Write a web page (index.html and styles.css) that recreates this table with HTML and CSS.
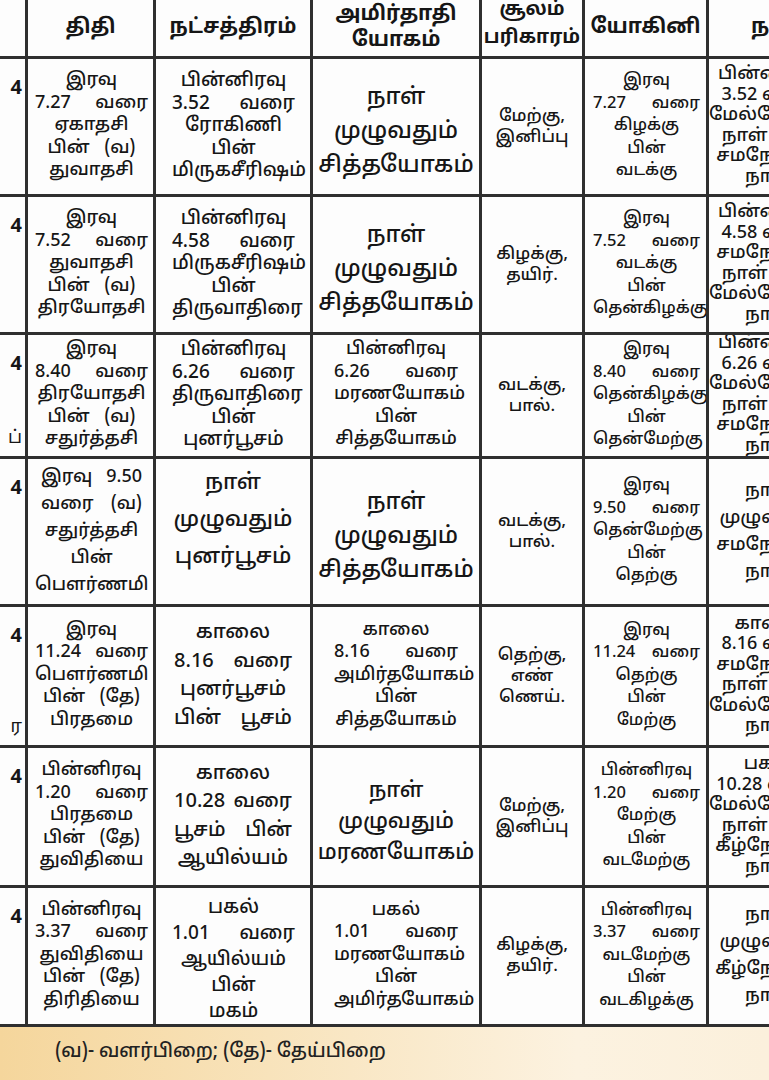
FILE: index.html
```html
<!DOCTYPE html>
<html lang="ta">
<head>
<meta charset="utf-8">
<title>பஞ்சாங்கம்</title>
<link rel="stylesheet" href="styles.css">
</head>
<body>
<div class="page">
  <div class="sheet">
    <div class="h"></div>
    <div class="h"><p>திதி</p></div>
    <div class="h"><p>நட்சத்திரம்</p></div>
    <div class="h"><p>அமிர்தாதி<br>யோகம்</p></div>
    <div class="h up"><p>சூலம்<br>பரிகாரம்</p></div>
    <div class="h"><p>யோகினி</p></div>
    <div class="h last"><p>நாள்</p></div>

    <div class="d"><p>4</p></div>
    <div class="c t"><p><span>இரவு</span><span class="w">7.27 வரை</span><span>ஏகாதசி</span><span class="v">பின் (வ)</span><span>துவாதசி</span></p></div>
    <div class="c k"><p><span>பின்னிரவு</span><span class="w">3.52 வரை</span><span>ரோகிணி</span><span>பின்</span><span>மிருகசீரிஷம்</span></p></div>
    <div class="c a big"><p><span>நாள்</span><span>முழுவதும்</span><span>சித்தயோகம்</span></p></div>
    <div class="c s"><p><span>மேற்கு,</span><span>இனிப்பு</span></p></div>
    <div class="c y"><p><span>இரவு</span><span class="w">7.27 வரை</span><span>கிழக்கு</span><span>பின்</span><span>வடக்கு</span></p></div>
    <div class="c n"><p><span>பின்னிரவு</span><span>3.52 வரை</span><span>மேல்நோக்கு</span><span>நாள் பின்</span><span>சமநோக்கு</span><span>நாள்</span></p></div>

    <div class="d"><p>4</p></div>
    <div class="c t"><p><span>இரவு</span><span class="w">7.52 வரை</span><span>துவாதசி</span><span class="v">பின் (வ)</span><span>திரயோதசி</span></p></div>
    <div class="c k"><p><span>பின்னிரவு</span><span class="w">4.58 வரை</span><span>மிருகசீரிஷம்</span><span>பின்</span><span>திருவாதிரை</span></p></div>
    <div class="c a big"><p><span>நாள்</span><span>முழுவதும்</span><span>சித்தயோகம்</span></p></div>
    <div class="c s"><p><span>கிழக்கு,</span><span>தயிர்.</span></p></div>
    <div class="c y"><p><span>இரவு</span><span class="w">7.52 வரை</span><span>வடக்கு</span><span>பின்</span><span>தென்கிழக்கு</span></p></div>
    <div class="c n"><p><span>பின்னிரவு</span><span>4.58 வரை</span><span>சமநோக்கு</span><span>நாள் பின்</span><span>மேல்நோக்கு</span><span>நாள்</span></p></div>

    <div class="d"><p>4</p><p class="foot">ப்</p></div>
    <div class="c t"><p><span>இரவு</span><span class="w">8.40 வரை</span><span>திரயோதசி</span><span class="v">பின் (வ)</span><span>சதுர்த்தசி</span></p></div>
    <div class="c k"><p><span>பின்னிரவு</span><span class="w">6.26 வரை</span><span>திருவாதிரை</span><span>பின்</span><span>புனர்பூசம்</span></p></div>
    <div class="c a"><p><span>பின்னிரவு</span><span class="w">6.26 வரை</span><span>மரணயோகம்</span><span>பின்</span><span>சித்தயோகம்</span></p></div>
    <div class="c s"><p><span>வடக்கு,</span><span>பால்.</span></p></div>
    <div class="c y"><p><span>இரவு</span><span class="w">8.40 வரை</span><span>தென்கிழக்கு</span><span>பின்</span><span>தென்மேற்கு</span></p></div>
    <div class="c n"><p><span>பின்னிரவு</span><span>6.26 வரை</span><span>மேல்நோக்கு</span><span>நாள் பின்</span><span>சமநோக்கு</span><span>நாள்</span></p></div>

    <div class="d"><p>4</p></div>
    <div class="c t wide"><p><span class="w in">இரவு 9.50</span><span class="w in">வரை (வ)</span><span>சதுர்த்தசி</span><span>பின்</span><span>பௌர்ணமி</span></p></div>
    <div class="c k big raise"><p><span>நாள்</span><span>முழுவதும்</span><span>புனர்பூசம்</span></p></div>
    <div class="c a big"><p><span>நாள்</span><span>முழுவதும்</span><span>சித்தயோகம்</span></p></div>
    <div class="c s"><p><span>வடக்கு,</span><span>பால்.</span></p></div>
    <div class="c y"><p><span>இரவு</span><span class="w">9.50 வரை</span><span>தென்மேற்கு</span><span>பின்</span><span>தெற்கு</span></p></div>
    <div class="c n wide"><p><span>நாள்</span><span>முழுவதும்</span><span>சமநோக்கு</span><span>நாள்</span></p></div>

    <div class="d"><p>4</p><p class="foot">ர</p></div>
    <div class="c t"><p><span>இரவு</span><span class="w">11.24 வரை</span><span>பௌர்ணமி</span><span class="w in2">பின் (தே)</span><span>பிரதமை</span></p></div>
    <div class="c k four"><p><span>காலை</span><span class="w">8.16 வரை</span><span>புனர்பூசம்</span><span class="w">பின் பூசம்</span></p></div>
    <div class="c a"><p><span>காலை</span><span class="w">8.16 வரை</span><span>அமிர்தயோகம்</span><span>பின்</span><span>சித்தயோகம்</span></p></div>
    <div class="c s"><p><span>தெற்கு,</span><span>எண்</span><span>ணெய்.</span></p></div>
    <div class="c y"><p><span>இரவு</span><span class="w">11.24 வரை</span><span>தெற்கு</span><span>பின்</span><span>மேற்கு</span></p></div>
    <div class="c n"><p><span>காலை</span><span>8.16 வரை</span><span>சமநோக்கு</span><span>நாள் பின்</span><span>மேல்நோக்கு</span><span>நாள்</span></p></div>

    <div class="d"><p>4</p></div>
    <div class="c t"><p><span>பின்னிரவு</span><span class="w">1.20 வரை</span><span>பிரதமை</span><span class="w in2">பின் (தே)</span><span>துவிதியை</span></p></div>
    <div class="c k four"><p><span>காலை</span><span class="w">10.28 வரை</span><span class="w">பூசம் பின்</span><span>ஆயில்யம்</span></p></div>
    <div class="c a big narrow"><p><span>நாள்</span><span>முழுவதும்</span><span>மரணயோகம்</span></p></div>
    <div class="c s"><p><span>மேற்கு,</span><span>இனிப்பு</span></p></div>
    <div class="c y"><p><span>பின்னிரவு</span><span class="w">1.20 வரை</span><span>மேற்கு</span><span>பின்</span><span>வடமேற்கு</span></p></div>
    <div class="c n"><p><span>பகல்</span><span>10.28 வரை</span><span>மேல்நோக்கு</span><span>நாள் பின்</span><span>கீழ்நோக்கு</span><span>நாள்</span></p></div>

    <div class="d"><p>4</p></div>
    <div class="c t"><p><span>பின்னிரவு</span><span class="w">3.37 வரை</span><span>துவிதியை</span><span class="w in2">பின் (தே)</span><span>திரிதியை</span></p></div>
    <div class="c k mid"><p><span>பகல்</span><span class="w">1.01 வரை</span><span>ஆயில்யம்</span><span>பின்</span><span>மகம்</span></p></div>
    <div class="c a"><p><span>பகல்</span><span class="w">1.01 வரை</span><span>மரணயோகம்</span><span>பின்</span><span>அமிர்தயோகம்</span></p></div>
    <div class="c s"><p><span>கிழக்கு,</span><span>தயிர்.</span></p></div>
    <div class="c y"><p><span>பின்னிரவு</span><span class="w">3.37 வரை</span><span>வடமேற்கு</span><span>பின்</span><span>வடகிழக்கு</span></p></div>
    <div class="c n wide"><p><span>நாள்</span><span>முழுவதும்</span><span>கீழ்நோக்கு</span><span>நாள்</span></p></div>
  </div>
  <div class="legend">(வ)- வளர்பிறை; (தே)- தேய்பிறை</div>
</div>
</body>
</html>
```

FILE: styles.css
```css
html, body {
  margin: 0;
  padding: 0;
  background: #ffffff;
}

.page {
  width: 769px;
  height: 1080px;
  overflow: hidden;
  font-family: "Noto Sans Tamil", "Lohit Tamil", "Noto Sans", sans-serif;
  color: #161616;
}

.sheet {
  display: grid;
  grid-template-columns: 25px 125px 154px 166px 100px 121px 118px;
  grid-template-rows: 56px 135px 135px 121px 145px 138px 137px 136px;
  gap: 3px;
  width: max-content;
  background: #2f2f2f;
  padding-bottom: 3px;
}

.sheet > div {
  background: #fdfdfd;
  overflow: hidden;
  display: flex;
  flex-direction: column;
  align-items: center;
  justify-content: center;
  text-align: center;
}

.sheet p {
  margin: 0;
}

/* header cells */
.h {
  font-size: 20.5px;
  font-weight: 700;
  line-height: 26px;
}

.h.up {
  justify-content: flex-start;
  font-size: 19px;
}

.h.up p {
  margin-top: -4px;
  line-height: 28px;
}

.h.last {
  align-items: flex-start;
  padding-left: 42px;
}

/* date column (cut off) */
.d {
  align-items: flex-end !important;
  justify-content: space-between !important;
  font-size: 20px;
  font-weight: 700;
  padding: 18px 3px 6px 0;
}

.d .foot {
  font-weight: 400;
  font-size: 18px;
}

/* body cells */
.c {
  font-weight: 500;
  line-height: 22.5px;
}

.c p {
  align-self: stretch;
}

.c p span {
  display: block;
  white-space: nowrap;
}

.c p span.w {
  text-align: justify;
  text-align-last: justify;
}

.c p span.v {
  word-spacing: 10px;
}

.c p span.in {
  padding: 0 6px;
}

.c p span.in2 {
  padding: 0 8px;
}

.c.t {
  font-size: 18px;
}

.c.t p {
  padding: 0 5px 0 7px;
}

.c.k {
  font-size: 19px;
}

.c.k p {
  padding: 0 15px 0 16px;
}

.c.a {
  font-size: 18px;
}

.c.a p {
  padding: 0 21px;
}

.c.y {
  font-size: 16.5px;
}

.c.y p {
  padding: 0 6px 0 8px;
}

.c.s {
  font-size: 17px;
  line-height: 21px;
}

.c.n {
  font-size: 18px;
  line-height: 20.5px;
}

.c.wide {
  line-height: 27px;
}

.c.n.wide {
  line-height: 27px;
}

.c.big {
  font-size: 23px;
  line-height: 34px;
  padding-top: 12px;
}

.c.big p {
  padding: 0;
}

.c.big.narrow {
  font-size: 21.5px;
  line-height: 31px;
}

.c.big.raise {
  font-size: 22px;
  line-height: 37px;
  padding-top: 0;
  padding-bottom: 22px;
}

.c.k.four {
  font-size: 20px;
  line-height: 28.5px;
}

.c.k.four p {
  padding: 0 18px;
}

.c.k.mid {
  line-height: 26px;
  padding-top: 8px;
}

.legend {
  height: 54px;
  box-sizing: border-box;
  padding: 12px 0 0 55px;
  font-size: 19px;
  line-height: 26px;
  font-weight: 500;
  background: linear-gradient(90deg, #f5d69c 0%, #f8e3bb 35%, #fcf2e0 75%, #fbf0dc 100%);
  color: #222;
}
```
